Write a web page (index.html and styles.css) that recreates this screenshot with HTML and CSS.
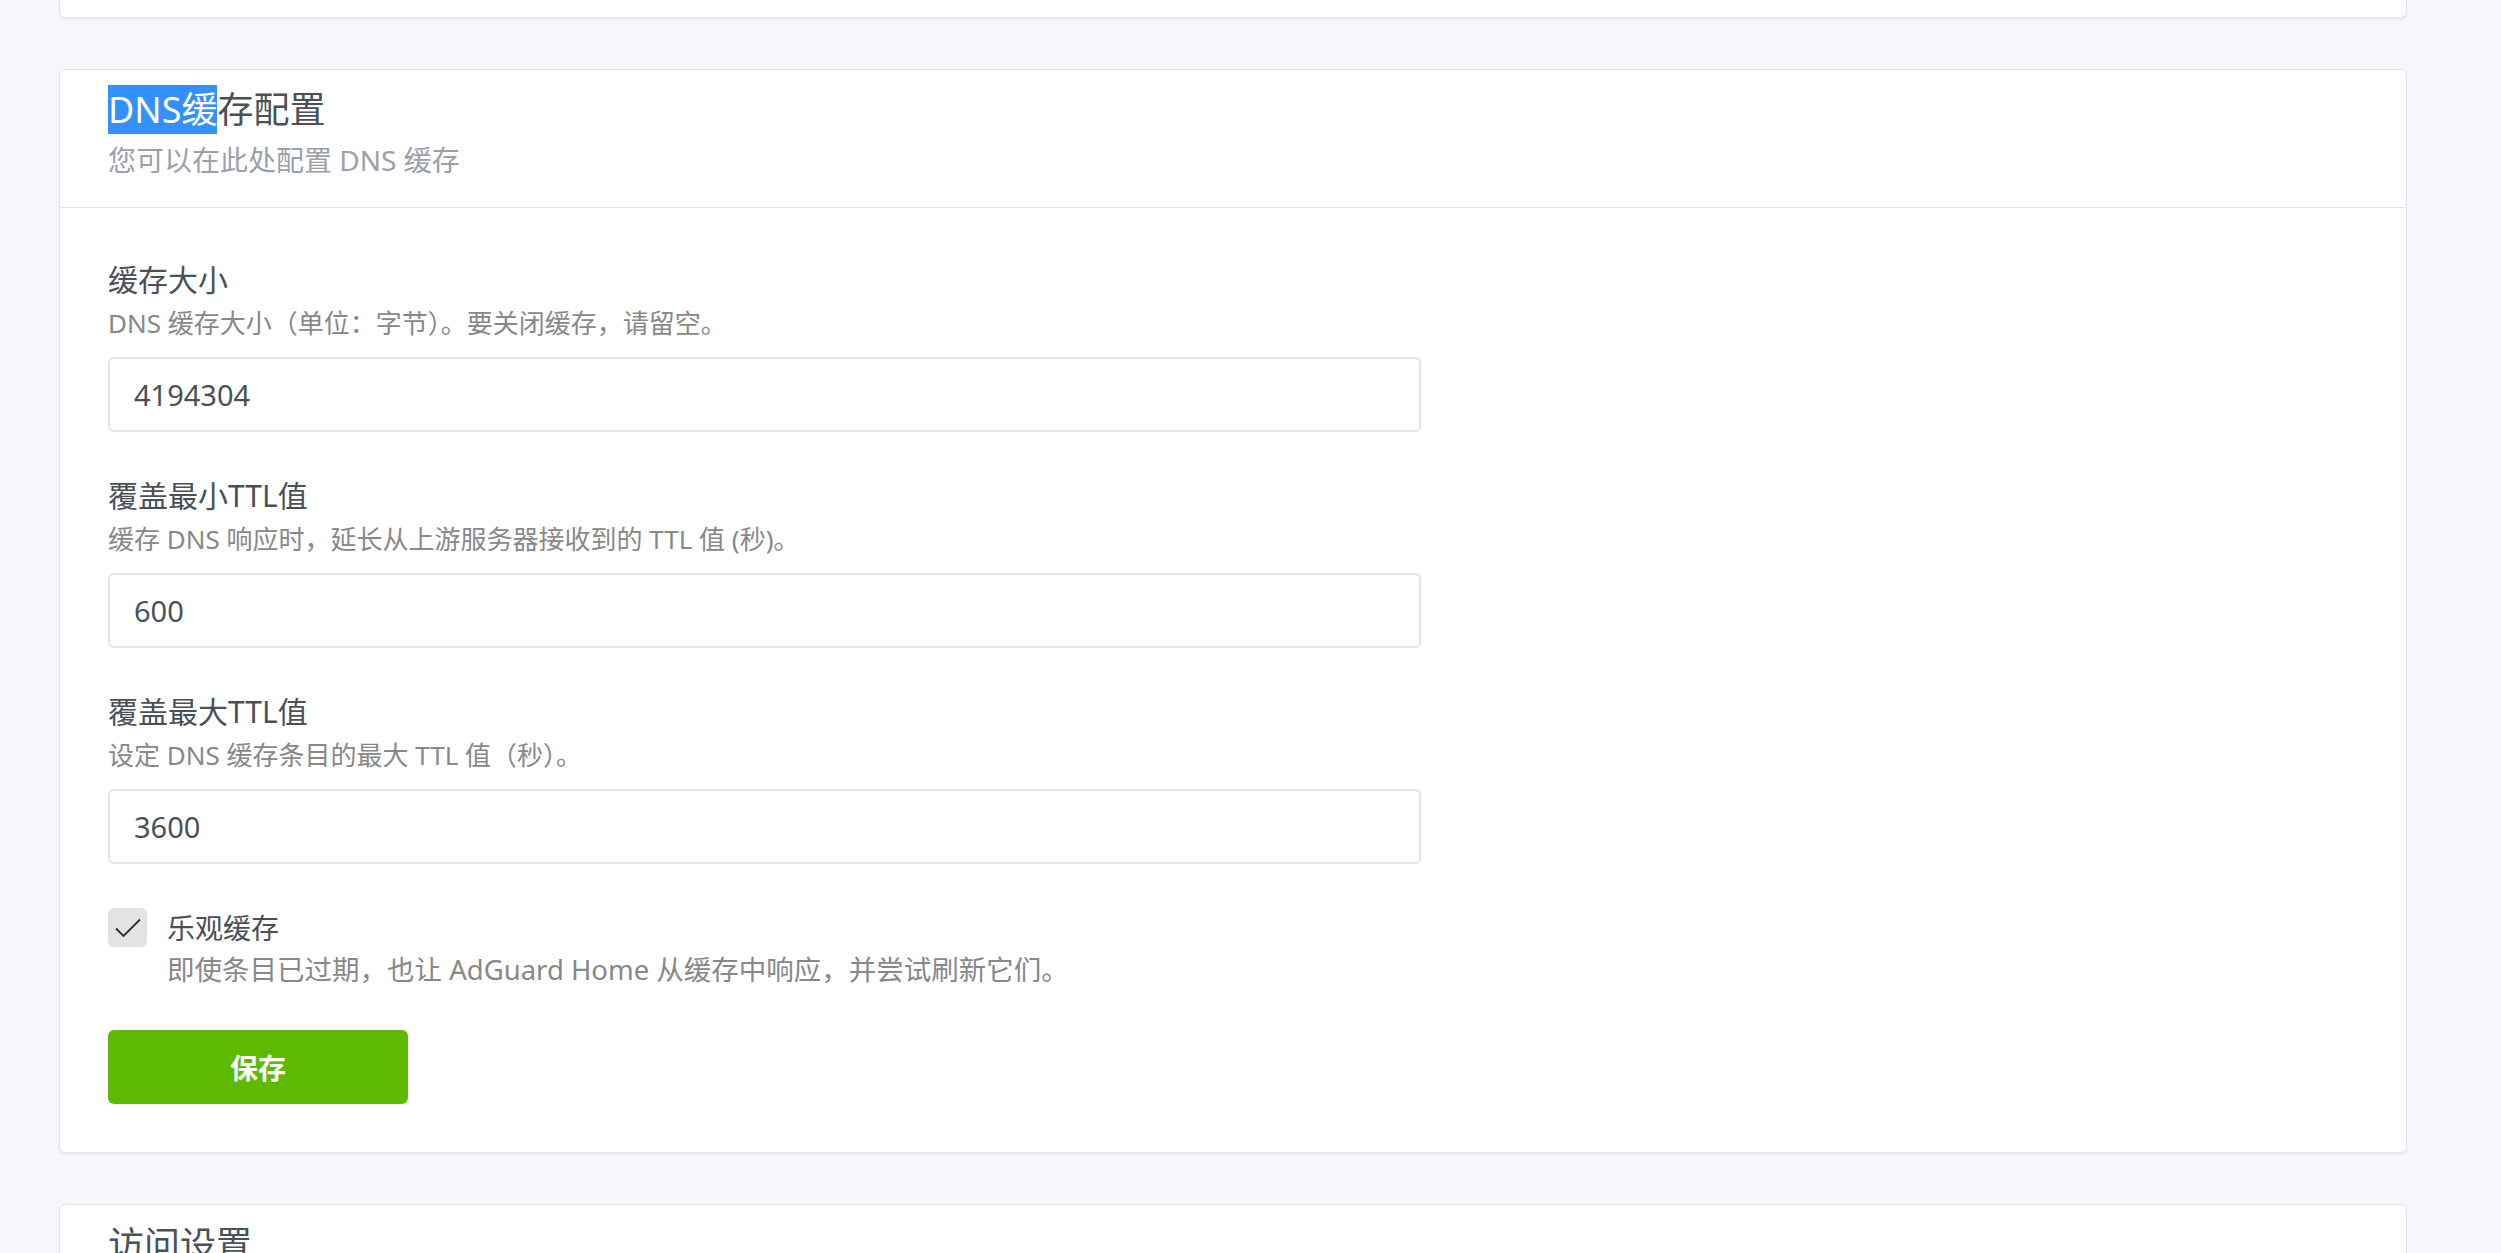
FILE: index.html
```html
<!DOCTYPE html>
<html lang="zh-CN">
<head>
    <meta charset="UTF-8">
    <meta name="viewport" content="width=device-width, initial-scale=1.0">
    <title>DNS 设置</title>
    <link rel="stylesheet" href="styles.css">
</head>
<body>
    <div class="page">
        <div class="card card-prev"></div>

        <div class="card">
            <div class="card-header">
                <div class="card-title"><span class="selected">DNS缓</span>存配置</div>
                <div class="card-subtitle">您可以在此处配置 DNS 缓存</div>
            </div>
            <div class="card-body">
                <div class="form-group">
                    <label class="form-label" for="cacheSize">缓存大小</label>
                    <div class="form-desc">DNS 缓存大小（单位：字节）。要关闭缓存，请留空。</div>
                    <input class="form-control" type="number" id="cacheSize" value="4194304">
                </div>
                <div class="form-group">
                    <label class="form-label" for="ttlMin">覆盖最小TTL值</label>
                    <div class="form-desc">缓存 DNS 响应时，延长从上游服务器接收到的 TTL 值 (秒)。</div>
                    <input class="form-control" type="number" id="ttlMin" value="600">
                </div>
                <div class="form-group">
                    <label class="form-label" for="ttlMax">覆盖最大TTL值</label>
                    <div class="form-desc">设定 DNS 缓存条目的最大 TTL 值（秒）。</div>
                    <input class="form-control" type="number" id="ttlMax" value="3600">
                </div>
                <label class="checkbox">
                    <span class="checkbox-box">
                        <svg viewBox="0 0 26 20" width="26" height="20"><path d="M1 10.5l7.5 7.5L25 1.5" fill="none" stroke="#2b2b2b" stroke-width="1.8"/></svg>
                    </span>
                    <span class="checkbox-text">
                        <span class="checkbox-label">乐观缓存</span>
                        <span class="checkbox-desc">即使条目已过期，也让 AdGuard Home 从缓存中响应，并尝试刷新它们。</span>
                    </span>
                </label>
                <button class="btn-save" type="button">保存</button>
            </div>
        </div>

        <div class="card">
            <div class="card-header">
                <div class="card-title">访问设置</div>
                <div class="card-subtitle">您可以在此处配置访问规则</div>
            </div>
        </div>
    </div>
</body>
</html>
```

FILE: styles.css
```css
html, body {
    margin: 0;
    padding: 0;
    height: 100%;
    overflow: hidden;
}
body {
    background-color: #f5f7fb;
    font-family: "Noto Sans", "Noto Sans CJK SC", sans-serif;
    color: #495057;
}
.page {
    width: 2348px;
    margin-left: 59px;
}
.card {
    background-color: #fff;
    border: 1px solid #e0e5ec;
    border-radius: 6px;
    box-shadow: 0 2px 3px rgba(0, 20, 60, 0.05);
    margin-bottom: 51px;
}
.card-prev {
    height: 17px;
    border-top: none;
    border-radius: 0 0 6px 6px;
}
.card-header {
    padding: 16px 48px 26px;
    border-bottom: 1px solid #e0e5ec;
}
.card-title {
    font-size: 36px;
    line-height: 47px;
    color: #495057;
}
.selected {
    background-color: #3390ff;
    color: #fff;
}
.card-subtitle {
    margin-top: 6px;
    font-size: 28px;
    line-height: 42px;
    color: #9aa0ac;
}
.card-body {
    padding: 51px 48px 48px;
}
.form-group {
    margin-bottom: 43px;
}
.form-label {
    display: block;
    font-size: 30px;
    line-height: 42px;
    color: #495057;
}
.form-desc {
    margin-top: 4px;
    font-size: 26px;
    line-height: 36px;
    color: #888;
}
.form-control {
    display: block;
    box-sizing: border-box;
    width: 1313px;
    height: 75px;
    margin-top: 16px;
    padding: 0 24px;
    font-family: inherit;
    font-size: 29px;
    color: #495057;
    background: #fff;
    border: 2px solid #e0e5ec;
    border-radius: 6px;
    outline: none;
    -moz-appearance: textfield;
}
.form-control::-webkit-inner-spin-button,
.form-control::-webkit-outer-spin-button {
    -webkit-appearance: none;
    margin: 0;
}
.checkbox {
    display: flex;
    gap: 20px;
    align-items: flex-start;
    margin-bottom: 39px;
}
.checkbox-box {
    display: flex;
    align-items: center;
    justify-content: center;
    width: 39px;
    height: 39px;
    margin-top: 1px;
    background-color: #e3e3e3;
    border-radius: 6px;
    flex-shrink: 0;
}
.checkbox-text {
    display: flex;
    flex-direction: column;
}
.checkbox-label {
    font-size: 28px;
    line-height: 42px;
    color: #495057;
}
.checkbox-desc {
    font-size: 27.5px;
    line-height: 42px;
    color: #888;
}
.btn-save {
    display: block;
    width: 300px;
    height: 74px;
    padding: 0;
    font-family: inherit;
    font-size: 28px;
    font-weight: bold;
    color: #fff;
    background-color: #5eba00;
    border: none;
    border-radius: 6px;
    cursor: pointer;
}
```
